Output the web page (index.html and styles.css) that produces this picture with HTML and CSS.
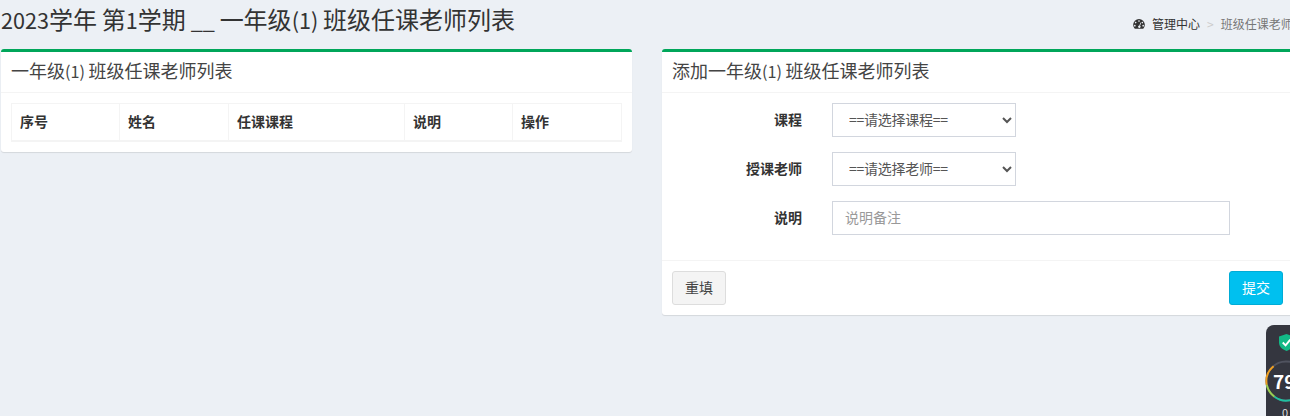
FILE: index.html
```html
<!DOCTYPE html>
<html lang="zh">
<head>
<meta charset="utf-8">
<title>班级任课老师列表</title>
<link rel="stylesheet" href="styles.css">
</head>
<body>
<div class="page">
  <header class="head">
    <h1 class="title"><span class="l">2023</span>学年<span class="l"> </span>第<span class="l">1</span>学期<span class="l"> __ </span>一年级<span class="l">(1) </span>班级任课老师列表</h1>
    <ol class="crumbs">
      <li class="crumb-home">
        <svg class="gauge" viewBox="0 0 14 12" width="12" height="10"><path fill="#333" fill-rule="evenodd" d="M7 0a7 7 0 0 0-7 7c0 1.6.5 3 1.4 4.2.2.3.5.5.9.5h9.4c.4 0 .7-.2.9-.5C13.500 10 14 8.600 14 7a7 7 0 0 0-7-7zM7 1.500a1 1 0 1 1 0 2 1 1 0 0 1 0-2zM3 3.300a1 1 0 1 1 0 2 1 1 0 0 1 0-2zM11 3.300a1 1 0 1 1 0 2 1 1 0 0 1 0-2zM2 7a1 1 0 1 1 0 2 1 1 0 0 1 0-2zM12 7a1 1 0 1 1 0 2 1 1 0 0 1 0-2zM8.800 4.200l.8.400-1.300 3.400a1.500 1.500 0 1 1-.9-.3z"/></svg>
        <span>管理中心</span>
      </li>
      <li class="crumb-sep">&gt;</li>
      <li class="crumb-current">班级任课老师列表</li>
    </ol>
  </header>
  <main class="columns">
    <section class="box box-left">
      <h3 class="box-title">一年级<span class="l">(1) </span>班级任课老师列表</h3>
      <div class="box-body">
        <table class="table">
          <thead>
            <tr>
              <th class="c1">序号</th>
              <th class="c2">姓名</th>
              <th class="c3">任课课程</th>
              <th class="c4">说明</th>
              <th class="c5">操作</th>
            </tr>
          </thead>
        </table>
      </div>
    </section>
    <section class="box">
      <h3 class="box-title">添加一年级<span class="l">(1) </span>班级任课老师列表</h3>
      <form class="form">
        <div class="row">
          <label class="label">课程</label>
          <select class="select"><option>==请选择课程==</option></select>
        </div>
        <div class="row">
          <label class="label">授课老师</label>
          <select class="select"><option>==请选择老师==</option></select>
        </div>
        <div class="row">
          <label class="label">说明</label>
          <input class="input" type="text" placeholder="说明备注">
        </div>
      </form>
      <div class="footer">
        <button class="btn btn-reset" type="button">重填</button>
        <button class="btn btn-submit" type="button">提交</button>
      </div>
    </section>
  </main>
</div>
<aside class="widget">
  <svg class="shield" viewBox="0 0 16 18" width="15" height="17"><path fill="#12b886" d="M8 0l8 2.500v6.500c0 4.200-3.400 7.500-8 9-4.600-1.500-8-4.800-8-9V2.500z"/><path fill="none" stroke="#fff" stroke-width="2" d="M4 9l3 3 5-6"/></svg>
  <div class="score">
    <svg class="ring" viewBox="0 0 44 44" width="42" height="42">
      <circle cx="22" cy="22" r="20.500" fill="none" stroke="#50535f" stroke-width="2"/>
      <path d="M9 6.500A20.500 20.500 0 0 0 1.800 26" fill="none" stroke="#f0a020" stroke-width="2"/>
      <path d="M1.800 26A20.500 20.500 0 0 0 10 38.500" fill="none" stroke="#9acd50" stroke-width="2"/>
      <path d="M10 38.500A20.500 20.500 0 0 0 30 41" fill="none" stroke="#20c0a0" stroke-width="2"/>
    </svg>
    <span class="num">79</span>
  </div>
  <span class="sub">0</span>
</aside>
</body>
</html>
```
FILE: styles.css
```css
* { box-sizing: border-box; }
html, body {
  margin: 0;
  height: 416px;
  overflow: hidden;
  background: #ecf0f5;
}
body {
  position: relative;
  font-family: "Noto Sans CJK SC", "Noto Sans", sans-serif;
  font-size: 14px;
  color: #333;
}
.l { font-size: .9em; }
.page { width: 1293px; padding: 0 0 0 1px; }
.head {
  display: flex;
  justify-content: space-between;
  align-items: flex-start;
  height: 49px;
}
.title {
  margin: 2px 0 0;
  font-size: 24px;
  font-weight: 400;
  line-height: 34px;
  white-space: nowrap;
}
.crumbs {
  display: flex;
  list-style: none;
  margin: 15px 0 0;
  padding: 0;
  width: 160px;
  font-size: 12px;
  line-height: 18px;
  white-space: nowrap;
  overflow: hidden;
}
.crumb-home { display: flex; align-items: center; gap: 7px; }
.crumb-sep { color: #ccc; margin: 0 7px; }
.crumb-current { color: #777; }
.columns {
  display: grid;
  grid-template-columns: 631px 631px;
  gap: 30px;
  align-items: start;
}
.box {
  background: #fff;
  border-top: 3px solid #00a65a;
  border-radius: 3px;
  box-shadow: 0 1px 1px rgba(0,0,0,.1);
}
.box-title {
  margin: 0;
  padding: 0 10px;
  height: 41px;
  font-size: 18px;
  font-weight: 400;
  line-height: 36px;
  color: #444;
  border-bottom: 1px solid #f4f4f4;
}
.box-body { padding: 10px; }
.table {
  width: 611px;
  border-collapse: collapse;
  table-layout: fixed;
  border: 1px solid #f4f4f4;
  border-bottom-width: 2px;
}
.table th {
  height: 37px;
  padding: 0 8px 2px;
  border: 1px solid #f4f4f4;
  text-align: left;
  font-size: 14px;
  font-weight: 700;
  color: #333;
}
.c1 { width: 108px; }
.c2 { width: 109px; }
.c3 { width: 176px; }
.c4 { width: 108px; }
.form { padding: 10px 0 25px; display: flex; flex-direction: column; gap: 15px; }
.row { display: flex; align-items: center; height: 34px; }
.label {
  width: 140px;
  padding-bottom: 2px;
  text-align: right;
  font-weight: 700;
  font-size: 14px;
  color: #333;
}
.select {
  margin-left: 30px;
  width: 184px;
  height: 34px;
  padding: 0 12px 2px;
  border: 1px solid #d2d6de;
  border-radius: 0;
  background: #fff;
  color: #555;
  font: inherit;
  font-size: 14px;
  letter-spacing: -.25px;
}
.input {
  margin-left: 30px;
  width: 398px;
  height: 34px;
  padding: 0 12px 2px;
  border: 1px solid #d2d6de;
  font: inherit;
  font-size: 14px;
  color: #555;
  outline: 0;
}
.input::placeholder { color: #999; opacity: 1; }
.footer {
  display: flex;
  justify-content: space-between;
  padding: 10px;
  border-top: 1px solid #f4f4f4;
}
.btn {
  width: 54px;
  height: 34px;
  padding: 0 0 2px;
  border: 1px solid transparent;
  border-radius: 3px;
  font: inherit;
  font-size: 14px;
}
.btn-reset { background: #f4f4f4; border-color: #ddd; color: #444; }
.btn-submit { background: #00c0ef; border-color: #00acd6; color: #fff; }
.widget {
  position: absolute;
  left: 1266px;
  top: 325px;
  width: 60px;
  height: 100px;
  background: #34363f;
  border-radius: 8px;
  color: #fff;
}
.shield { position: absolute; left: 13px; top: 9px; }
.score { position: absolute; left: -1px; top: 35px; width: 42px; height: 42px; }
.ring { display: block; }
.num {
  position: absolute;
  left: 8px;
  top: 6px;
  font-size: 19px;
  font-weight: 700;
  line-height: 30px;
}
.sub {
  position: absolute;
  left: 16px;
  top: 80px;
  font-size: 11px;
  line-height: 14px;
  color: #ddd;
}
```
